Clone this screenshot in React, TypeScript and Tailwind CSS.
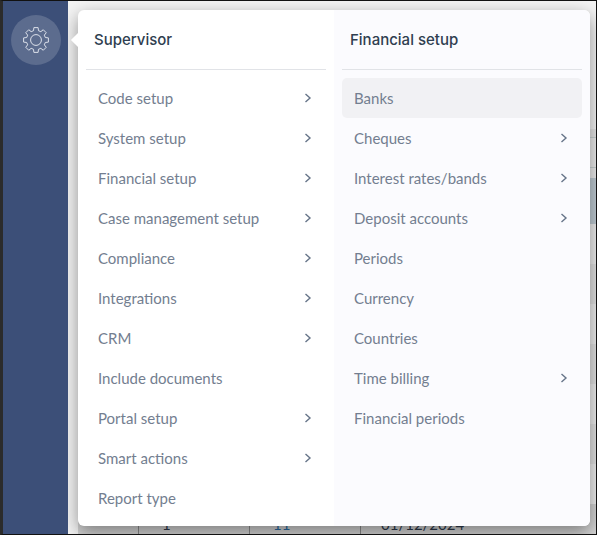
const menuItems = [
  { name: "Code setup", more: true },
  { name: "System setup", more: true },
  { name: "Financial setup", more: true },
  { name: "Case management setup", more: true },
  { name: "Compliance", more: true },
  { name: "Integrations", more: true },
  { name: "CRM", more: true },
  { name: "Include documents", more: false },
  { name: "Portal setup", more: true },
  { name: "Smart actions", more: true },
  { name: "Report type", more: false },
];

const subItems = [
  { name: "Banks", more: false, active: true },
  { name: "Cheques", more: true },
  { name: "Interest rates/bands", more: true },
  { name: "Deposit accounts", more: true },
  { name: "Periods", more: false },
  { name: "Currency", more: false },
  { name: "Countries", more: false },
  { name: "Time billing", more: true },
  { name: "Financial periods", more: false },
];

type Item = { name: string; more: boolean; active?: boolean };

// 8 tooth cog, outline only
const gearPath = () => {
  const pts: string[] = [];
  for (let i = 0; i < 8; i++) {
    const a = (i * Math.PI) / 4 - Math.PI / 2;
    const at = (r: number, d: number) =>
      `${(12 + r * Math.cos(a + d)).toFixed(2)} ${(12 + r * Math.sin(a + d)).toFixed(2)}`;
    pts.push(at(8.9, -0.26), at(11.6, -0.17), at(11.6, 0.17), at(8.9, 0.26));
  }
  return `M${pts.join("L")}Z`;
};

const Chevron = () => (
  <svg width="8" height="10" viewBox="0 0 8 10" fill="none" stroke="#667488" strokeWidth="1.4">
    <path d="M1.5 1 L6 5 L1.5 9" />
  </svg>
);

const Row = ({ item }: { item: Item }) => (
  <div
    className={`h-10 flex items-center justify-between pl-3 pr-[14px] rounded-[5px] text-[15px] text-[#737e90] ${
      item.active ? "bg-[#f1f1f4]" : ""
    }`}
  >
    <span>{item.name}</span>
    {item.more && <Chevron />}
  </div>
);

const Column = ({ title, items, className }: { title: string; items: Item[]; className: string }) => (
  <div className={`px-2 ${className}`}>
    <div className="h-[60px] pl-2 pt-[21px] leading-[18px] text-[15px] font-medium text-[#2f3e50] border-b border-[#e1e3e7] font-['Inter',sans-serif]">
      {title}
    </div>
    <div className="mt-2 flex flex-col">
      {items.map((item) => (
        <Row key={item.name} item={item} />
      ))}
    </div>
  </div>
);

export default function App() {
  return (
    <div className="w-[597px] h-[535px] overflow-hidden border-l-[3px] border-r border-y border-l-[#2b2b2b] border-r-[#111] border-y-[#111] flex font-['Lato',sans-serif]">
      <div className="w-[65px] bg-[#3c4f78] pl-[8px] pt-[14px] shrink-0">
        <div className="w-[50px] h-[50px] rounded-full bg-[#5c6c8e] flex items-center justify-center">
          <svg width="26" height="26" viewBox="0 0 24 24" fill="none" stroke="#dfe3ec" strokeWidth="0.9" strokeLinejoin="round">
            <path d={gearPath()} />
            <circle cx="12" cy="12" r="5" />
          </svg>
        </div>
      </div>
      <div className="flex-1 relative flex bg-[#f4f4f4] overflow-hidden">
        {/* table behind the menu */}
        <div className="w-[10px] shrink-0" />
        <div className="flex-1 block">
          <div className="h-[128px]" />
          <div className="h-[9px] bg-[#e6e6e6] border-b border-[#c9d2d2]" />
          <div className="h-[30px] bg-[#ececec] border-b border-[#c9d2d2]" />
          <div className="h-[10px] bg-[#ececec]" />
          <div className="h-[46px] bg-[#bfcbd3]" />
          <div className="h-10 bg-[#eeeeee]" />
          <div className="h-10 bg-[#e2e2e2]" />
          <div className="h-10 bg-[#eeeeee]" />
          <div className="h-10 bg-[#e2e2e2]" />
          <div className="h-10 bg-[#eeeeee]" />
          <div className="h-10 bg-[#e2e2e2]" />
          <div className="h-10 bg-[#eeeeee]" />
          <div className="h-10 flex text-[15px] leading-[20px] text-[#2f3a4c] bg-[#d4d4d4]">
            <div className="w-[61px] h-full border-r border-[#8c8c8c]" />
            <div className="w-[111px] h-full border-r border-[#8c8c8c] pl-[23px] pt-[10px]">1</div>
            <div className="w-[111px] h-full border-r border-[#8c8c8c] pl-[23px] pt-[10px] text-[#2b6ca3]">11</div>
            <div className="pl-[20px] pt-[10px] h-full">01/12/2024</div>
          </div>
        </div>

        <div className="absolute left-[5px] top-[34px] w-[10px] h-[10px] rotate-45 bg-white z-10" />
        <div className="absolute left-[10px] top-[9px] w-[512px] h-[516px] rounded-[6px] bg-white flex overflow-hidden shadow-[0_6px_18px_rgba(0,0,0,0.42)]">
          <Column title="Supervisor" items={menuItems} className="w-[256px]" />
          <Column title="Financial setup" items={subItems} className="w-[256px] bg-[#fbfbfe]" />
        </div>
      </div>
    </div>
  );
}
